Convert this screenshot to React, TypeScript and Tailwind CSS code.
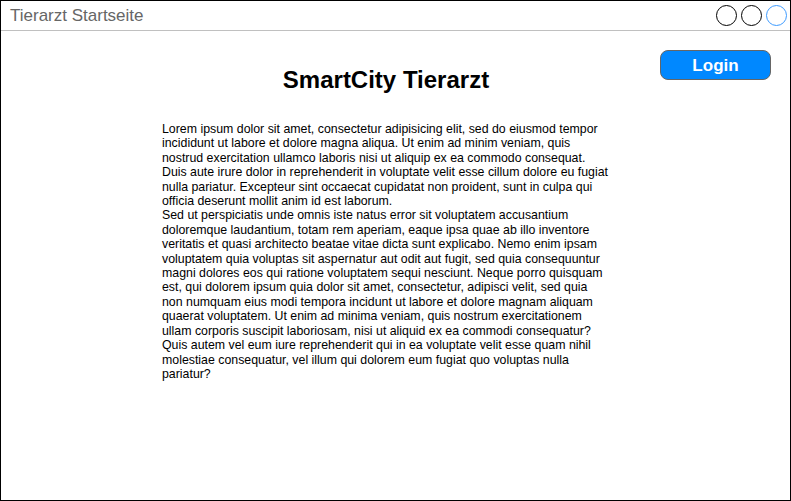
const lines = [
  "Lorem ipsum dolor sit amet, consectetur adipisicing elit, sed do eiusmod tempor",
  "incididunt ut labore et dolore magna aliqua. Ut enim ad minim veniam, quis",
  "nostrud exercitation ullamco laboris nisi ut aliquip ex ea commodo consequat.",
  "Duis aute irure dolor in reprehenderit in voluptate velit esse cillum dolore eu fugiat",
  "nulla pariatur. Excepteur sint occaecat cupidatat non proident, sunt in culpa qui",
  "officia deserunt mollit anim id est laborum.",
  "Sed ut perspiciatis unde omnis iste natus error sit voluptatem accusantium",
  "doloremque laudantium, totam rem aperiam, eaque ipsa quae ab illo inventore",
  "veritatis et quasi architecto beatae vitae dicta sunt explicabo. Nemo enim ipsam",
  "voluptatem quia voluptas sit aspernatur aut odit aut fugit, sed quia consequuntur",
  "magni dolores eos qui ratione voluptatem sequi nesciunt. Neque porro quisquam",
  "est, qui dolorem ipsum quia dolor sit amet, consectetur, adipisci velit, sed quia",
  "non numquam eius modi tempora incidunt ut labore et dolore magnam aliquam",
  "quaerat voluptatem. Ut enim ad minima veniam, quis nostrum exercitationem",
  "ullam corporis suscipit laboriosam, nisi ut aliquid ex ea commodi consequatur?",
  "Quis autem vel eum iure reprehenderit qui in ea voluptate velit esse quam nihil",
  "molestiae consequatur, vel illum qui dolorem eum fugiat quo voluptas nulla",
  "pariatur?",
];

export default function App() {
  return (
    <div className="w-[791px] h-[501px] bg-white border border-black flex flex-col font-['Liberation_Sans',Arial,sans-serif]">
      {/* window title bar */}
      <div className="h-[30px] border-b border-[#c0c0c0] flex items-center justify-between pl-[9px] pr-[3px] shrink-0">
        <span className="text-[17px] text-[#666666] leading-none">Tierarzt Startseite</span>
        <div className="flex items-center gap-[4px]">
          <div className="w-[21px] h-[21px] rounded-full border border-black" />
          <div className="w-[21px] h-[21px] rounded-full border border-black" />
          <div className="w-[21px] h-[21px] rounded-full border border-[#3d9bff]" />
        </div>
      </div>

      {/* page */}
      <div className="flex items-start pt-[19px]">
        <div className="w-[450px] ml-[161px] flex flex-col">
          <h1 className="text-[24px] font-bold text-black text-center leading-[28px] mt-[16px] -ml-[2px]">
            SmartCity Tierarzt
          </h1>
          <div className="mt-[28px] text-[12.35px] leading-[14.4px] text-black">
            {lines.map((l, i) => (
              <div key={i} className="whitespace-nowrap">
                {l}
              </div>
            ))}
          </div>
        </div>
        <button className="ml-auto mr-[19px] w-[111px] h-[30px] rounded-[8px] bg-[#0088ff] border border-[#666666] text-white font-bold text-[17px] leading-none">
          Login
        </button>
      </div>
    </div>
  );
}
